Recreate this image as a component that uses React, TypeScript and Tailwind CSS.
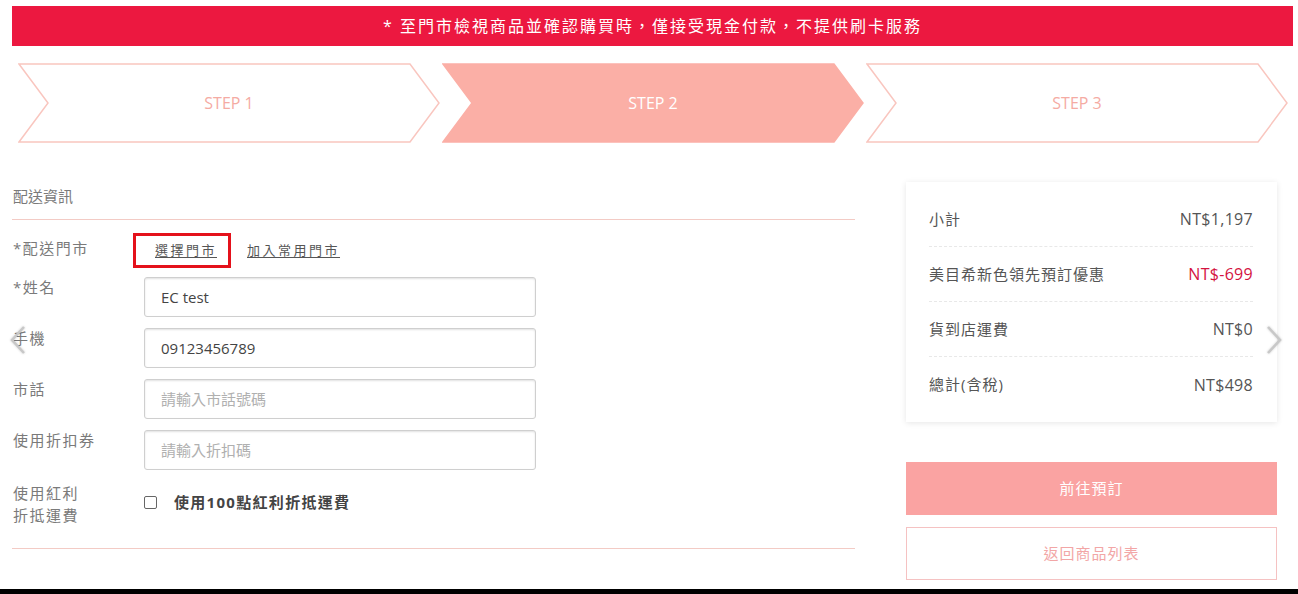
const FONT = { fontFamily: '"Open Sans", "Noto Sans CJK TC", sans-serif' };

function Step({ label, active }: { label: string; active?: boolean }) {
  return (
    <div className="relative w-[422px] h-[80px] flex items-center justify-center">
      <svg className="absolute inset-0" width="422" height="80" viewBox="0 0 422 80">
        <polygon
          points="1,1 392,1 421,40 392,79 1,79 30,40"
          fill={active ? "#fbafa6" : "#ffffff"}
          stroke={active ? "#fbafa6" : "#f9c6bf"}
          strokeWidth="1.5"
        />
      </svg>
      <span className={`relative text-[16px] ${active ? "text-white" : "text-[#f5aba3]"}`}>{label}</span>
    </div>
  );
}

function Field({ label, value, placeholder }: { label: string; value?: string; placeholder?: string }) {
  return (
    <div className="flex mt-[11px]">
      <div className="w-[132px] pl-[1px] leading-[20px] text-[15px] tracking-[1.5px] text-[#7a7a7a]">{label}</div>
      <input
        readOnly
        defaultValue={value}
        placeholder={placeholder}
        className="w-[392px] h-[40px] rounded-[3px] border border-[#cfcfcf] shadow-[inset_0_1px_2px_rgba(0,0,0,0.12)] px-[16px] text-[15px] text-[#444] placeholder:text-[#b0b0b0] outline-none"
      />
    </div>
  );
}

function SumRow({ label, value, red, last }: { label: string; value: string; red?: boolean; last?: boolean }) {
  return (
    <div className={`h-[55px] flex items-center justify-between ${last ? "" : "border-b border-dashed border-[#e8e8e8]"}`}>
      <span className="text-[15px] text-[#555] tracking-[1px]">{label}</span>
      <span className={`text-[16px] tracking-[0.3px] ${red ? "text-[#d4143f]" : "text-[#555]"}`}>{value}</span>
    </div>
  );
}

function Arrow({ dir }: { dir: "left" | "right" }) {
  return (
    <svg width="20" height="30" viewBox="0 0 20 30" className="drop-shadow-[0_0_1px_rgba(0,0,0,0.2)]">
      <polyline
        points={dir === "left" ? "16,2 4,15 16,28" : "4,2 16,15 4,28"}
        fill="none"
        stroke="#c8c8c8"
        strokeWidth="2.5"
      />
    </svg>
  );
}

export default function App() {
  return (
    <div className="relative w-[1298px] h-[594px] bg-white flex flex-col overflow-hidden" style={FONT}>
      {/* Banner */}
      <div className="mt-[6px] ml-[12px] w-[1281px] h-[40px] bg-[#ec1840] text-white text-[16px] tracking-[2px] flex items-center justify-center">
        * 至門市檢視商品並確認購買時，僅接受現金付款，不提供刷卡服務
      </div>

      {/* Steps */}
      <div className="mt-[17px] ml-[18px] flex gap-[2px]">
        <Step label="STEP 1" />
        <Step label="STEP 2" active />
        <Step label="STEP 3" />
      </div>

      <div className="flex mt-[39px]">
        {/* Left: Shipping info */}
        <div className="ml-[12px] w-[843px]">
          <div className="leading-[28px] pb-[9px] pl-[1px] border-b border-[#f3cbc5] text-[15px] text-[#7a7a7a]">配送資訊</div>

          <div className="flex items-center mt-[13px]">
            <div className="w-[121px] pl-[1px] -mt-[4px] text-[15px] tracking-[1.5px] text-[#7a7a7a]">*配送門市</div>
            <div className="w-[98px] h-[35px] border-[3px] border-[#e4111b] flex items-center justify-end pr-[11px]">
              <span className="text-[13px] tracking-[2.5px] text-[#555] underline underline-offset-2">選擇門市</span>
            </div>
            <span className="ml-[16px] text-[13px] tracking-[2.5px] text-[#555] underline underline-offset-2">加入常用門市</span>
          </div>

          <div className="-mt-[2px]">
            <Field label="*姓名" value="EC test" />
          </div>
          <Field label="手機" value="09123456789" />
          <Field label="市話" placeholder="請輸入市話號碼" />
          <Field label="使用折扣券" placeholder="請輸入折扣碼" />

          <div className="flex items-center mt-[12px] pb-[22px] border-b border-[#f3cbc5]">
            <div className="w-[132px] pl-[1px] leading-[22px] text-[15px] tracking-[1.5px] text-[#7a7a7a]">
              使用紅利
              <br />
              折抵運費
            </div>
            <div className="flex items-center gap-[17px] -mt-[4px]">
              <span className="w-[13px] h-[13px] rounded-[2px] border border-[#666] bg-white" />
              <span className="text-[15px] font-bold tracking-[1.3px] text-[#444]">使用100點紅利折抵運費</span>
            </div>
          </div>
        </div>

        {/* Right: Summary */}
        <div className="ml-[51px] w-[371px]">
          <div className="bg-white shadow-[0_1px_6px_rgba(0,0,0,0.1)] pt-[10px] pb-[10px] pl-[23px] pr-[24px]">
            <SumRow label="小計" value="NT$1,197" />
            <SumRow label="美目希新色領先預訂優惠" value="NT$-699" red />
            <SumRow label="貨到店運費" value="NT$0" />
            <SumRow label="總計(含稅)" value="NT$498" last />
          </div>
          <button className="mt-[40px] w-full h-[53px] bg-[#faa3a2] text-white text-[15px] tracking-[1px]">前往預訂</button>
          <button className="mt-[12px] w-full h-[53px] border border-[#f5c2c2] text-[#f2a6a6] text-[15px] tracking-[1px]">返回商品列表</button>
        </div>
      </div>

      {/* carousel arrows */}
      <div className="absolute z-10 left-[8px] top-[325px]">
        <Arrow dir="left" />
      </div>
      <div className="absolute z-10 left-[1264px] top-[325px]">
        <Arrow dir="right" />
      </div>

      <div className="mt-auto h-[5px] bg-black" />
    </div>
  );
}
